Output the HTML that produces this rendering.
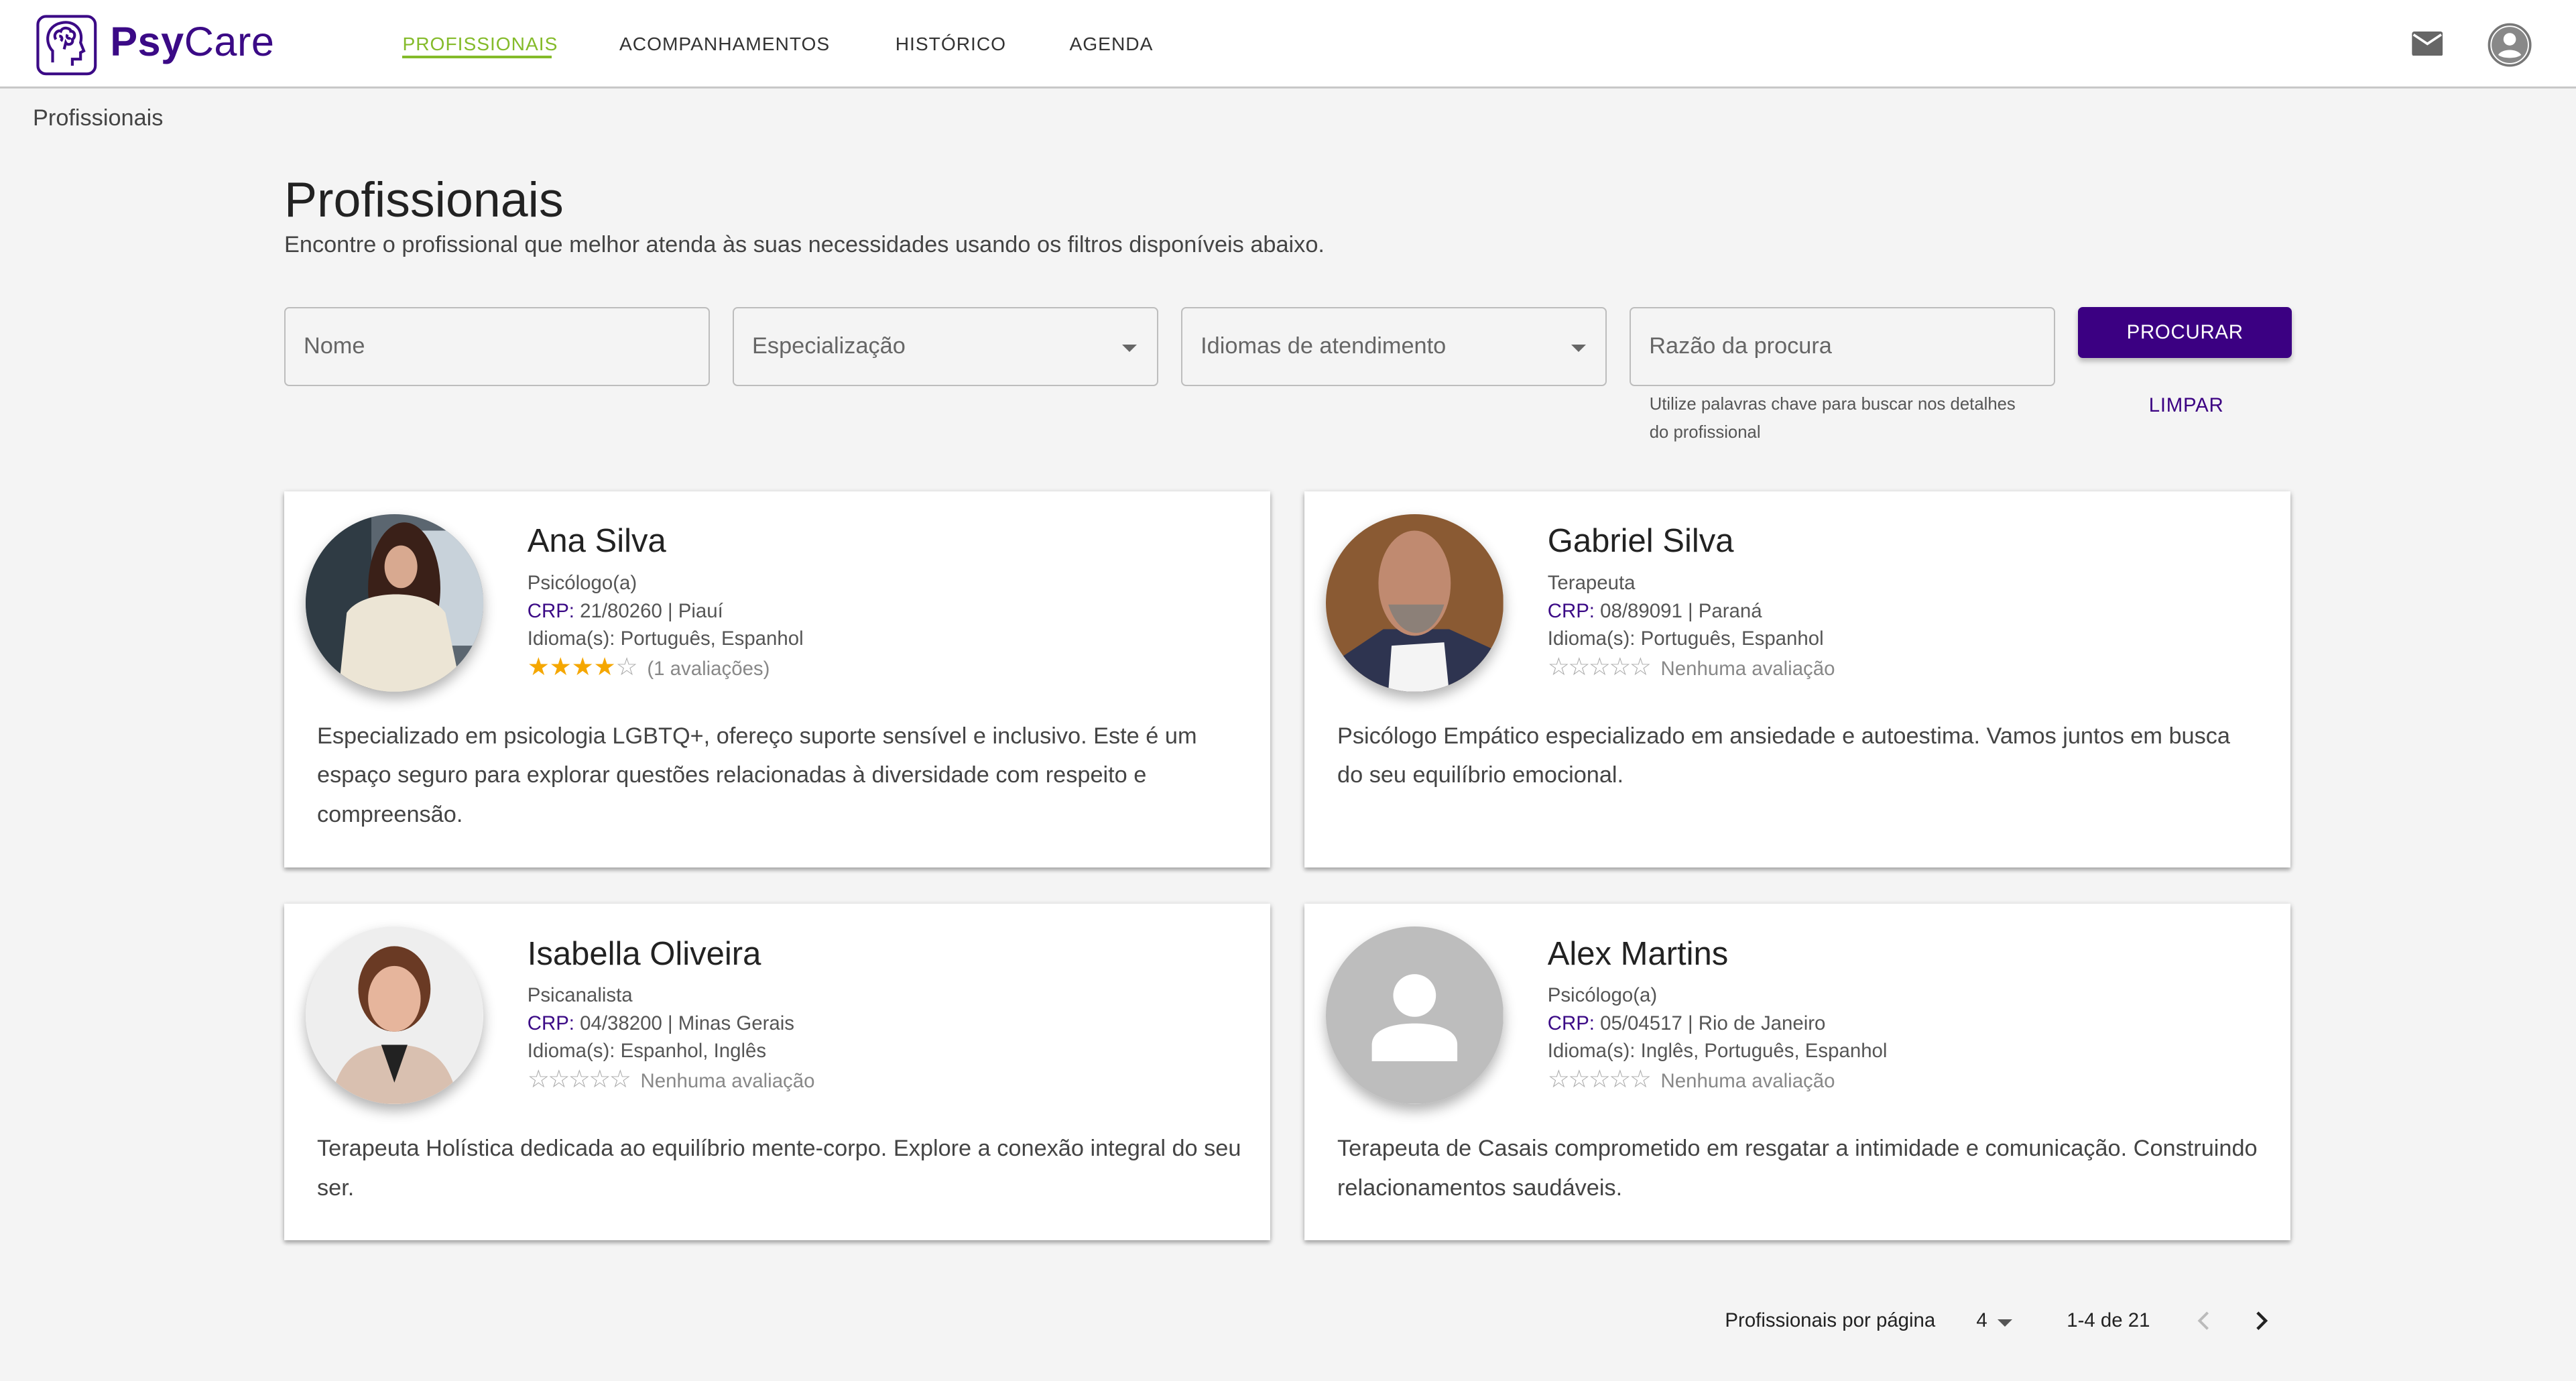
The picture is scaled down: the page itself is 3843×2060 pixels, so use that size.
<!DOCTYPE html>
<html><head><meta charset="utf-8">
<style>
*{margin:0;padding:0;box-sizing:border-box}
html,body{width:3843px;height:2060px;overflow:hidden;background:#f4f4f4}
#r{zoom:2.45089;width:1568px;height:841px;position:relative;font-family:"Liberation Sans",Roboto,sans-serif;color:#222}
.a{position:absolute;white-space:nowrap}
.hdr{position:absolute;left:0;top:0;width:1568px;height:54px;background:#fff;border-bottom:1.5px solid #c8c8c8}
.nav{font-size:11.5px;letter-spacing:.4px;color:#333;top:20px}
.inp{position:absolute;top:187px;height:48px;width:259px;border:1px solid #bdbdbd;border-radius:3px;background:#f4f4f4;font-size:14px;color:#666;padding:15px 11px}
.caret{position:absolute;right:12px;top:22px;width:0;height:0;border-left:4.5px solid transparent;border-right:4.5px solid transparent;border-top:4.5px solid #666}
.card{position:absolute;background:#fff;width:600px;box-shadow:0 1px 3px rgba(0,0,0,.3),0 2px 2px rgba(0,0,0,.12)}
.av{position:absolute;left:13px;top:14px;width:108px;height:108px;border-radius:50%;overflow:hidden;box-shadow:0 4px 8px rgba(0,0,0,.3)}
.nm{position:absolute;left:148px;top:19px;font-size:20px;color:#222}
.ln{position:absolute;left:148px;font-size:12px;color:#555}
.ln b{color:#3b0a86;font-weight:normal}
.st{color:#f5a700;font-size:15px;letter-spacing:0}
.se{color:#aaa;font-size:15px;letter-spacing:-1px}
.ds{position:absolute;left:20px;top:137px;width:565px;font-size:14px;line-height:24px;color:#444;white-space:normal}
</style></head><body><div id="r">
<div class="hdr"></div>
<svg class="a" style="left:22px;top:9px" width="38" height="37" viewBox="0 0 38 37" fill="none" stroke="#3b0a86" stroke-width="1.7"><rect x="1" y="1" width="35" height="35" rx="5"/><path d="M10 29 L10 22 C5 17 6 7 15 5 C23 3 29 9 27 17 L29 22 L27 23 L27 27 L22 27 L22 31" /><path d="M12 15 C10 12 13 9 15 10 C16 7 21 8 21 10 C24 10 24 14 22 15 C23 18 19 19 18 17 L17 21 M14 13 C16 13 16 15 15 16 M19 12 C18 14 20 15 21 14"/></svg>
<div class="a" style="left:67px;top:11px;font-size:25px;color:#3b0a86;letter-spacing:.2px"><b>Psy</b>Care</div>
<div class="a nav" style="left:245px;color:#84bb2a">PROFISSIONAIS</div>
<div class="a" style="left:245px;top:34px;width:91px;height:1.5px;background:#84bb2a"></div>
<div class="a nav" style="left:377px">ACOMPANHAMENTOS</div>
<div class="a nav" style="left:545px">HISTÓRICO</div>
<div class="a nav" style="left:651px">AGENDA</div>
<svg class="a" style="left:1468px;top:19px" width="19" height="15" viewBox="0 0 20 16"><rect x="0" y="0" width="20" height="16" rx="1.5" fill="#666"/><path d="M1 2 L10 8 L19 2" stroke="#fff" stroke-width="1.6" fill="none"/></svg>
<svg class="a" style="left:1514px;top:14px" width="27" height="27" viewBox="0 0 27 27"><circle cx="13.5" cy="13.5" r="12.5" fill="#fff" stroke="#777" stroke-width="1.5"/><circle cx="13.5" cy="13.5" r="11" fill="#888"/><circle cx="13.5" cy="10" r="3.8" fill="#fff"/><path d="M6.5 19.5 C9 15.5 18 15.5 20.5 19.5 C18 22 9 22 6.5 19.5Z" fill="#fff"/></svg>
<div class="a" style="left:20px;top:64px;font-size:14px;color:#444">Profissionais</div>
<div class="a" style="left:173px;top:104px;font-size:30px;color:#222">Profissionais</div>
<div class="a" style="left:173px;top:141px;font-size:14px;color:#444">Encontre o profissional que melhor atenda às suas necessidades usando os filtros disponíveis abaixo.</div>
<div class="inp" style="left:173px">Nome</div>
<div class="inp" style="left:446px">Especialização<div class="caret"></div></div>
<div class="inp" style="left:719px">Idiomas de atendimento<div class="caret"></div></div>
<div class="inp" style="left:992px">Razão da procura</div>
<div class="a" style="left:1265px;top:187px;width:130px;height:31px;background:#3b0082;border-radius:3px;color:#fff;font-size:12px;text-align:center;line-height:31px;letter-spacing:.3px;box-shadow:0 2px 3px rgba(0,0,0,.25)">PROCURAR</div>
<div class="a" style="left:1308px;top:240px;font-size:12px;color:#3b0082;letter-spacing:.3px">LIMPAR</div>
<div class="a" style="left:1004px;top:238px;font-size:10.5px;color:#555;line-height:17px">Utilize palavras chave para buscar nos detalhes<br>do profissional</div>

<div class="card" style="left:173px;top:299px;height:229px">
<div class="av"><svg width="108" height="108"><rect width="108" height="108" fill="#5b6670"/><rect x="0" y="0" width="40" height="108" fill="#2f3b44"/><rect x="70" y="10" width="40" height="70" fill="#c8d2da"/><ellipse cx="60" cy="45" rx="22" ry="40" fill="#3a2018"/><ellipse cx="58" cy="32" rx="10" ry="13" fill="#d8a990"/><path d="M20 108 L25 60 C35 45 75 45 85 60 L95 108Z" fill="#ece5d5"/></svg></div>
<div class="nm">Ana Silva</div>
<div class="ln" style="top:49px">Psicólogo(a)</div>
<div class="ln" style="top:66px"><b>CRP:</b> 21/80260 | Piauí</div>
<div class="ln" style="top:83px">Idioma(s): Português, Espanhol</div>
<div class="ln" style="top:98px"><span class="st">★★★★</span><span class="se">☆</span>&nbsp;&nbsp;<span style="color:#888">(1 avaliações)</span></div>
<div class="ds" style="width:560px">Especializado em psicologia LGBTQ+, ofereço suporte sensível e inclusivo. Este é um espaço seguro para explorar questões relacionadas à diversidade com respeito e compreensão.</div>
</div>

<div class="card" style="left:794px;top:299px;height:229px">
<div class="av"><svg width="108" height="108"><rect width="108" height="108" fill="#8a5a33"/><path d="M0 108 L5 90 L35 70 L75 70 L108 85 L108 108Z" fill="#2e3450"/><path d="M38 108 L40 80 L72 78 L75 108Z" fill="#f4f4f4"/><ellipse cx="54" cy="42" rx="22" ry="32" fill="#c08a70"/><path d="M38 55 C45 78 65 78 72 55" fill="#8c8078"/></svg></div>
<div class="nm">Gabriel Silva</div>
<div class="ln" style="top:49px">Terapeuta</div>
<div class="ln" style="top:66px"><b>CRP:</b> 08/89091 | Paraná</div>
<div class="ln" style="top:83px">Idioma(s): Português, Espanhol</div>
<div class="ln" style="top:98px"><span class="se">☆☆☆☆☆</span>&nbsp;&nbsp;<span style="color:#888">Nenhuma avaliação</span></div>
<div class="ds" style="width:550px">Psicólogo Empático especializado em ansiedade e autoestima. Vamos juntos em busca do seu equilíbrio emocional.</div>
</div>

<div class="card" style="left:173px;top:550px;height:205px">
<div class="av"><svg width="108" height="108"><rect width="108" height="108" fill="#eeeeee"/><ellipse cx="54" cy="38" rx="22" ry="26" fill="#6a3a24"/><ellipse cx="54" cy="44" rx="16" ry="20" fill="#e6b59c"/><path d="M15 108 C20 78 35 72 54 72 C73 72 88 78 93 108Z" fill="#d9c0b0"/><path d="M46 72 L54 95 L62 72Z" fill="#222"/></svg></div>
<div class="nm">Isabella Oliveira</div>
<div class="ln" style="top:49px">Psicanalista</div>
<div class="ln" style="top:66px"><b>CRP:</b> 04/38200 | Minas Gerais</div>
<div class="ln" style="top:83px">Idioma(s): Espanhol, Inglês</div>
<div class="ln" style="top:98px"><span class="se">☆☆☆☆☆</span>&nbsp;&nbsp;<span style="color:#888">Nenhuma avaliação</span></div>
<div class="ds">Terapeuta Holística dedicada ao equilíbrio mente-corpo. Explore a conexão integral do seu ser.</div>
</div>

<div class="card" style="left:794px;top:550px;height:205px">
<div class="av"><svg width="108" height="108"><rect width="108" height="108" fill="#bdbdbd"/><circle cx="54" cy="42" r="13" fill="#fff"/><path d="M28 82 L28 72 C28 62 42 59 54 59 C66 59 80 62 80 72 L80 82Z" fill="#fff"/></svg></div>
<div class="nm">Alex Martins</div>
<div class="ln" style="top:49px">Psicólogo(a)</div>
<div class="ln" style="top:66px"><b>CRP:</b> 05/04517 | Rio de Janeiro</div>
<div class="ln" style="top:83px">Idioma(s): Inglês, Português, Espanhol</div>
<div class="ln" style="top:98px"><span class="se">☆☆☆☆☆</span>&nbsp;&nbsp;<span style="color:#888">Nenhuma avaliação</span></div>
<div class="ds">Terapeuta de Casais comprometido em resgatar a intimidade e comunicação. Construindo relacionamentos saudáveis.</div>
</div>

<div class="a" style="left:1050px;top:797px;font-size:12px;color:#222">Profissionais por página</div>
<div class="a" style="left:1203px;top:797px;font-size:12px;color:#222">4</div>
<div class="a" style="left:1216px;top:803px;border-left:4.5px solid transparent;border-right:4.5px solid transparent;border-top:4.5px solid #555"></div>
<div class="a" style="left:1258px;top:797px;font-size:12px;color:#222">1-4 de 21</div>
<svg class="a" style="left:1336px;top:797px" width="12" height="14"><path d="M8 2 L3 7 L8 12" stroke="#bbb" stroke-width="1.6" fill="none"/></svg>
<svg class="a" style="left:1370px;top:797px" width="12" height="14"><path d="M4 2 L9 7 L4 12" stroke="#222" stroke-width="1.8" fill="none"/></svg>
</div></body></html>
